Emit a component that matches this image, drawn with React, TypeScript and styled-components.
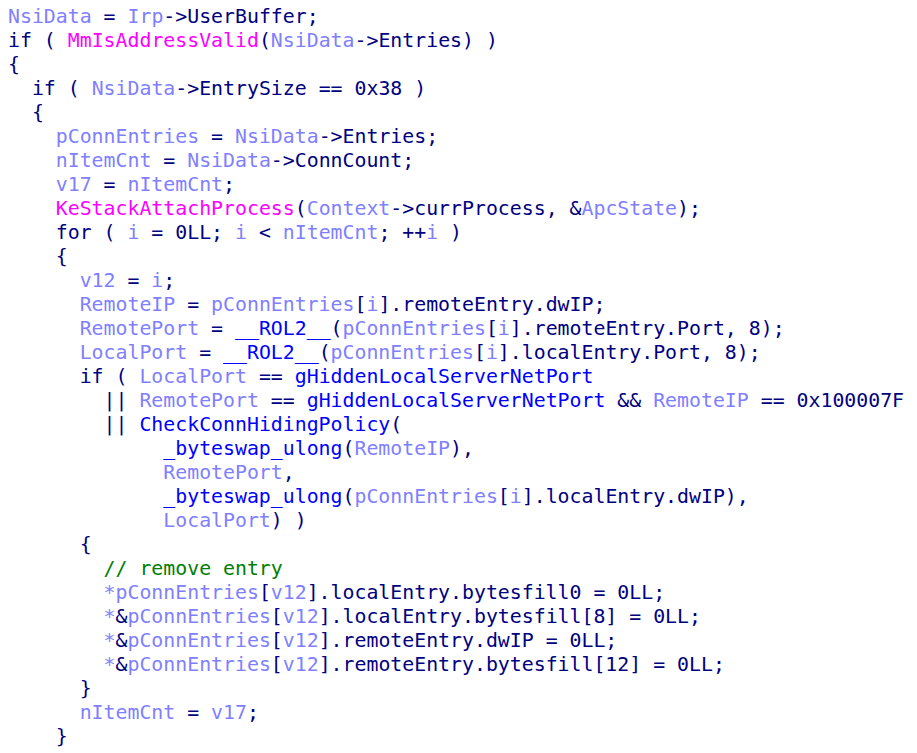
import React from "react";
import styled, { createGlobalStyle } from "styled-components";

const Global = createGlobalStyle`
  html, body { margin: 0; padding: 0; background: #ffffff; overflow: hidden; }
`;

type Kind = "n" | "v" | "f" | "b" | "c";
type Tok = [Kind, string];
type Line = { indent: number; toks: Tok[] };

const colors: Record<Kind, string> = {
  n: "#000080",
  v: "#8080ff",
  f: "#ff00ff",
  b: "#0000ff",
  c: "#008000",
};

const Code = styled.div`
  padding: 5px 0 0 8px;
  font-family: "DejaVu Sans Mono", "Liberation Mono", monospace;
  font-size: 19.85px;
  line-height: 24px;
  color: #000080;
  white-space: pre;
`;

const Row = styled.div<{ $indent: number }>`
  height: 24px;
  padding-left: ${(p) => p.$indent}ch;
`;

const Tk = styled.span<{ $kind: Kind }>`
  color: ${(p) => colors[p.$kind]};
`;

const L = (indent: number, ...toks: Tok[]): Line => ({ indent, toks });

const lines: Line[] = [
  L(0, ["v", "NsiData"], ["n", " = "], ["v", "Irp"], ["n", "->UserBuffer;"]),
  L(0, ["n", "if ( "], ["f", "MmIsAddressValid"], ["n", "("], ["v", "NsiData"], ["n", "->Entries) )"]),
  L(0, ["n", "{"]),
  L(2, ["n", "if ( "], ["v", "NsiData"], ["n", "->EntrySize == 0x38 )"]),
  L(2, ["n", "{"]),
  L(4, ["v", "pConnEntries"], ["n", " = "], ["v", "NsiData"], ["n", "->Entries;"]),
  L(4, ["v", "nItemCnt"], ["n", " = "], ["v", "NsiData"], ["n", "->ConnCount;"]),
  L(4, ["v", "v17"], ["n", " = "], ["v", "nItemCnt"], ["n", ";"]),
  L(4, ["f", "KeStackAttachProcess"], ["n", "("], ["v", "Context"], ["n", "->currProcess, &"], ["v", "ApcState"], ["n", ");"]),
  L(4, ["n", "for ( "], ["v", "i"], ["n", " = 0LL; "], ["v", "i"], ["n", " < "], ["v", "nItemCnt"], ["n", "; ++"], ["v", "i"], ["n", " )"]),
  L(4, ["n", "{"]),
  L(6, ["v", "v12"], ["n", " = "], ["v", "i"], ["n", ";"]),
  L(6, ["v", "RemoteIP"], ["n", " = "], ["v", "pConnEntries"], ["n", "["], ["v", "i"], ["n", "].remoteEntry.dwIP;"]),
  L(6, ["v", "RemotePort"], ["n", " = "], ["b", "__ROL2__"], ["n", "("], ["v", "pConnEntries"], ["n", "["], ["v", "i"], ["n", "].remoteEntry.Port, 8);"]),
  L(6, ["v", "LocalPort"], ["n", " = "], ["b", "__ROL2__"], ["n", "("], ["v", "pConnEntries"], ["n", "["], ["v", "i"], ["n", "].localEntry.Port, 8);"]),
  L(6, ["n", "if ( "], ["v", "LocalPort"], ["n", " == "], ["b", "gHiddenLocalServerNetPort"]),
  L(8, ["n", "|| "], ["v", "RemotePort"], ["n", " == "], ["b", "gHiddenLocalServerNetPort"], ["n", " && "], ["v", "RemoteIP"], ["n", " == 0x100007F"]),
  L(8, ["n", "|| "], ["b", "CheckConnHidingPolicy"], ["n", "("]),
  L(13, ["b", "_byteswap_ulong"], ["n", "("], ["v", "RemoteIP"], ["n", "),"]),
  L(13, ["v", "RemotePort"], ["n", ","]),
  L(13, ["b", "_byteswap_ulong"], ["n", "("], ["v", "pConnEntries"], ["n", "["], ["v", "i"], ["n", "].localEntry.dwIP),"]),
  L(13, ["v", "LocalPort"], ["n", ") )"]),
  L(6, ["n", "{"]),
  L(8, ["c", "// remove entry"]),
  L(8, ["v", "*pConnEntries"], ["n", "["], ["v", "v12"], ["n", "].localEntry.bytesfill0 = 0LL;"]),
  L(8, ["v", "*"], ["n", "&"], ["v", "pConnEntries"], ["n", "["], ["v", "v12"], ["n", "].localEntry.bytesfill[8] = 0LL;"]),
  L(8, ["v", "*"], ["n", "&"], ["v", "pConnEntries"], ["n", "["], ["v", "v12"], ["n", "].remoteEntry.dwIP = 0LL;"]),
  L(8, ["v", "*"], ["n", "&"], ["v", "pConnEntries"], ["n", "["], ["v", "v12"], ["n", "].remoteEntry.bytesfill[12] = 0LL;"]),
  L(6, ["n", "}"]),
  L(6, ["v", "nItemCnt"], ["n", " = "], ["v", "v17"], ["n", ";"]),
  L(4, ["n", "}"]),
];

export default function App() {
  return (
    <>
      <Global />
      <Code>
        {lines.map((ln, i) => (
          <Row key={i} $indent={ln.indent}>
            {ln.toks.map(([k, t], j) => (
              <Tk key={j} $kind={k}>
                {t}
              </Tk>
            ))}
          </Row>
        ))}
      </Code>
    </>
  );
}
